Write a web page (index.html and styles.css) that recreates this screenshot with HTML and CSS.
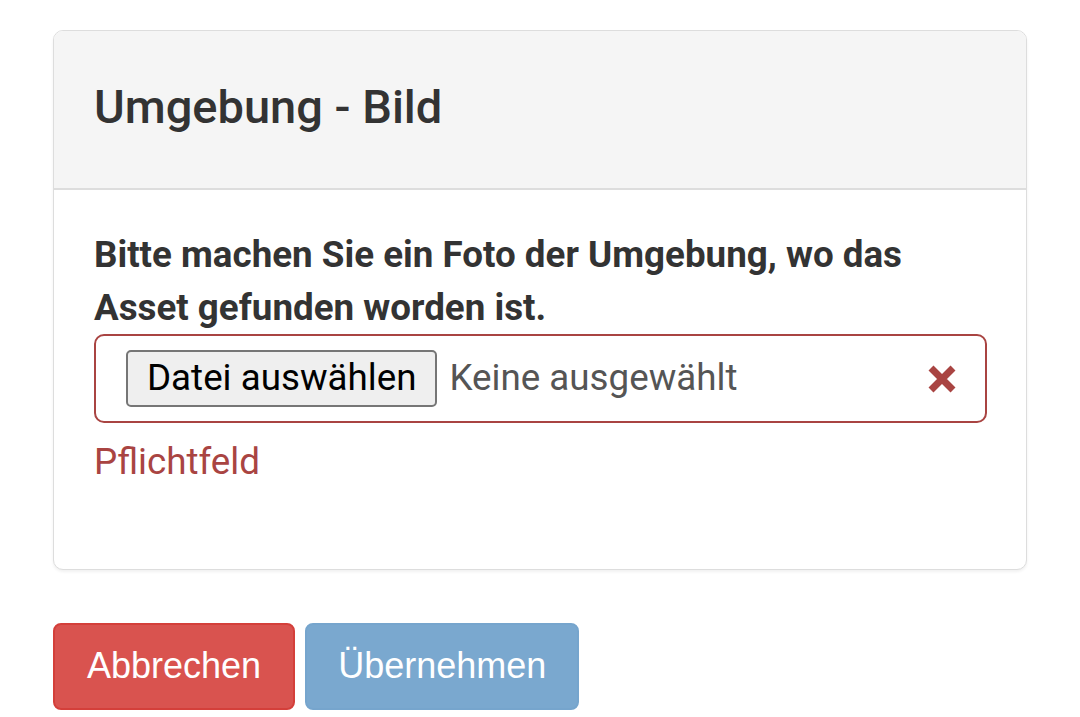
FILE: index.html
```html
<!DOCTYPE html>
<html lang="de">
<head>
  <meta charset="UTF-8" />
  <meta name="viewport" content="width=device-width, initial-scale=1.0" />
  <title>Umgebung - Bild</title>
  <link rel="stylesheet" href="styles.css">
</head>
<body>

  <div class="panel">
    <div class="panel-heading">
      <h3 class="panel-title">Umgebung - Bild</h3>
    </div>
    <div class="panel-body">
      <div class="form-group has-error">
        <label class="control-label">Bitte machen Sie ein Foto der Umgebung, wo das Asset gefunden worden ist.</label>
        <div class="file-box">
          <span class="file-btn">Datei auswählen</span>
          <span class="file-name">Keine ausgewählt</span>
          <svg class="feedback-icon" viewBox="0 0 30 28" width="30" height="28">
            <path d="M4 3 L26 25 M26 3 L4 25" stroke="#a94442" stroke-width="7" stroke-linecap="butt" fill="none"/>
          </svg>
        </div>
        <span class="help-block">Pflichtfeld</span>
      </div>
    </div>
  </div>

  <div class="actions">
    <button class="btn btn-danger">Abbrechen</button>
    <button class="btn btn-primary" disabled>Übernehmen</button>
  </div>

</body>
</html>
```

FILE: styles.css
```css
body {
  margin: 0;
  padding: 30px 53px;
  background: #fff;
  font-family: Roboto, "Noto Sans", sans-serif;
  font-size: 36.75px;
  line-height: 52.5px;
  color: #333;
}

.panel {
  border: 1px solid #ddd;
  border-radius: 10px;
  box-shadow: 0 2px 3px rgba(0, 0, 0, 0.06);
  background: #fff;
  overflow: hidden;
}

.panel-heading {
  height: 157px;
  padding: 0 40px;
  background: #f5f5f5;
  border-bottom: 2px solid #ddd;
  display: flex;
  align-items: center;
}

.panel-title {
  margin: 0 0 6px;
  font-size: 47px;
  font-weight: 500;
  line-height: 1.1;
  color: #333;
}

.panel-body {
  padding: 39px 39px 39px 40px;
}

.form-group {
  padding-bottom: 41px;
}

.control-label {
  display: block;
  font-weight: 700;
}

.file-box {
  height: 85px;
  border: 2px solid #a94442;
  border-radius: 10px;
  display: flex;
  align-items: center;
  padding: 0 28px 0 30px;
}

.file-btn {
  height: 53px;
  padding: 0 19px;
  background: #efefef;
  border: 2px solid #767676;
  border-radius: 5px;
  color: #000;
  display: flex;
  align-items: center;
}

.file-name {
  margin-left: 12px;
  color: #555;
  flex: 1;
}

.feedback-icon {
  display: block;
}

.help-block {
  display: block;
  margin-top: 13px;
  color: #a94442;
}

.actions {
  display: flex;
  gap: 10px;
  margin-top: 53px;
}

.btn {
  height: 87px;
  padding: 0 32px;
  border-radius: 8px;
  font-family: "Liberation Sans", Arial, sans-serif;
  font-size: 36px;
  color: #fff;
  display: inline-flex;
  align-items: center;
}

.btn-danger {
  background: #d9534f;
  border: 2px solid #d43f3a;
}

.btn-primary {
  background: #7aa8cf;
  border: 2px solid #76a5cd;
  padding: 0 31px;
}
```
